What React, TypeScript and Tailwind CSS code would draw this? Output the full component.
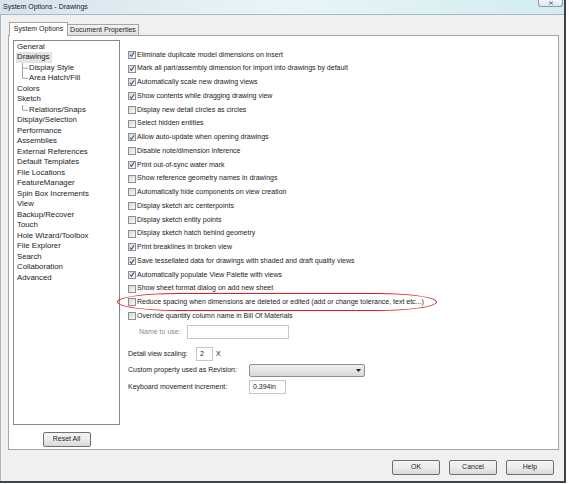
import React from "react";

const opts: [string, boolean][] = [
  ["Eliminate duplicate model dimensions on insert", true],
  ["Mark all part/assembly dimension for import into drawings by default", true],
  ["Automatically scale new drawing views", true],
  ["Show contents while dragging drawing view", true],
  ["Display new detail circles as circles", false],
  ["Select hidden entities", false],
  ["Allow auto-update when opening drawings", true],
  ["Disable note/dimension inference", false],
  ["Print out-of-sync water mark", true],
  ["Show reference geometry names in drawings", false],
  ["Automatically hide components on view creation", false],
  ["Display sketch arc centerpoints", false],
  ["Display sketch entity points", false],
  ["Display sketch hatch behind geometry", false],
  ["Print breaklines in broken view", true],
  ["Save tessellated data for drawings with shaded and draft quality views", true],
  ["Automatically populate View Palette with views", true],
  ["Show sheet format dialog on add new sheet", false],
  ["Reduce spacing when dimensions are deleted or edited (add or change tolerance, text etc...)", false],
  ["Override quantity column name in Bill Of Materials", false],
];

type Item = { label: string; child?: boolean; last?: boolean; selected?: boolean };
const items: Item[] = [
  { label: "General" },
  { label: "Drawings", selected: true },
  { label: "Display Style", child: true },
  { label: "Area Hatch/Fill", child: true, last: true },
  { label: "Colors" },
  { label: "Sketch" },
  { label: "Relations/Snaps", child: true, last: true },
  { label: "Display/Selection" },
  { label: "Performance" },
  { label: "Assemblies" },
  { label: "External References" },
  { label: "Default Templates" },
  { label: "File Locations" },
  { label: "FeatureManager" },
  { label: "Spin Box Increments" },
  { label: "View" },
  { label: "Backup/Recover" },
  { label: "Touch" },
  { label: "Hole Wizard/Toolbox" },
  { label: "File Explorer" },
  { label: "Search" },
  { label: "Collaboration" },
  { label: "Advanced" },
];

function CheckBox({ checked }: { checked: boolean }) {
  return (
    <div className="w-[8px] h-[8px] shrink-0 border border-[#8e8f8f] bg-gradient-to-br from-[#d6d6d6] to-[#fafafa] flex items-center justify-center">
      {checked && (
        <svg width="7" height="7" viewBox="0 0 7 7">
          <path d="M1 3.6 L2.8 5.6 L6 1" fill="none" stroke="#3b5c9e" strokeWidth="1.3" />
        </svg>
      )}
    </div>
  );
}

function Btn({ label, w }: { label: string; w: string }) {
  return (
    <div
      className={`${w} h-[15px] rounded-[2px] border border-[#707070] bg-gradient-to-b from-[#f4f4f4] via-[#ececec] to-[#d9d9d9] flex items-center justify-center text-[7px] text-[#1e1e1e]`}
    >
      {label}
    </div>
  );
}

export default function App() {
  return (
    <div
      className="w-[569px] h-[484px] bg-white overflow-hidden"
      style={{ fontFamily: '"Liberation Sans", Arial, sans-serif' }}
    >
      <div className="w-[566px] h-[483px] flex flex-col border-r-2 border-b-2 border-[#3f4447] bg-[#f0f0f0]">
        {/* title bar */}
        <div className="h-[14px] shrink-0 flex justify-between bg-gradient-to-r from-[#d6e3ec] via-[#e8f5f7] to-[#d3ecf0]">
          <div className="pl-[3px] pt-[2px] text-[7px] leading-[9px] text-[#1a1a1a]">System Options - Drawings</div>
          <div className="w-[25px] h-[7px] mr-[1px] rounded-b-[3px] border border-t-0 border-[#8a9aa6] bg-gradient-to-b from-[#f1f6f8] to-[#dbe6ec] flex items-center justify-center">
            <svg width="6" height="4" viewBox="0 0 6 4">
              <path d="M1 0.5 L5 3.5 M5 0.5 L1 3.5" stroke="#6b7b88" strokeWidth="1" />
            </svg>
          </div>
        </div>
        {/* client */}
        <div className="flex-1 flex flex-col border-t border-l border-[#a9b8c2] pl-[7px] pr-[5px] pt-[7px]">
          {/* tabs */}
          <div className="h-[13px] flex items-end pl-[1px] text-[7px] text-[#1e1e1e]">
            <div className="relative z-10 w-[59px] h-[14px] -mb-[1px] border border-b-0 border-[#a5a5a5] bg-white flex items-center justify-center">
              System Options
            </div>
            <div className="w-[71px] h-[11px] border border-l-0 border-b-0 border-[#a5a5a5] bg-gradient-to-b from-[#f2f2f2] to-[#e1e1e1] flex items-center justify-center">
              Document Properties
            </div>
          </div>
          {/* panel */}
          <div className="h-[415px] border border-[#a5a5a5] bg-white flex pl-[4px] pt-[4px]">
            {/* left column */}
            <div className="flex flex-col items-center w-[107px]">
              <div className="w-[107px] h-[385px] border border-[#828790] bg-white text-[7.8px] text-[#222] leading-[10.5px] pt-[0.5px]">
                {items.map((it) =>
                  it.child ? (
                    <div key={it.label} className="h-[10.5px] flex items-center pl-[3px]">
                      <svg width="12" height="10.5" viewBox="0 0 12 10.5" className="shrink-0">
                        <path
                          d={it.last ? "M5.5 0 V5.25 H11" : "M5.5 0 V10.5 M5.5 5.25 H11"}
                          fill="none"
                          stroke="#a0a0a0"
                          strokeWidth="1"
                        />
                      </svg>
                      <span>{it.label}</span>
                    </div>
                  ) : (
                    <div key={it.label} className="h-[10.5px] flex items-center pl-[2px]">
                      <span className={it.selected ? "bg-[#e3e3e3] px-[1px] pr-[2px]" : "px-[1px]"}>{it.label}</span>
                    </div>
                  )
                )}
              </div>
              <div className="mt-[7px]">
                <Btn label="Reset All" w="w-[48px]" />
              </div>
            </div>
            {/* right column */}
            <div className="ml-[8px] pt-[8px] flex flex-col text-[7px] text-[#222] whitespace-nowrap">
              {opts.map(([label, checked], i) => (
                <div key={label} className="relative h-[13.75px] flex items-center gap-[1px]">
                  <CheckBox checked={checked} />
                  <span>{label}</span>
                  {i === 18 && (
                    <div className="absolute left-[-11px] top-[-2.5px] w-[320px] h-[18px] rounded-[60px/9px] border-[1.5px] border-[#e11d24]" />
                  )}
                </div>
              ))}
              <div className="mt-[2px] h-[14px] flex items-center pl-[11px]">
                <span className="w-[48px] shrink-0 text-[#8a8a8a]">Name to use:</span>
                <div className="w-[102px] h-[14px] border border-[#c6c6c6] bg-white" />
              </div>
              <div className="mt-[8px] h-[14px] flex items-center">
                <span className="w-[68px] shrink-0">Detail view scaling:</span>
                <div className="w-[17px] h-[14px] border border-[#c6c6c6] bg-white flex items-center pl-[3px]">2</div>
                <span className="ml-[3px]">X</span>
              </div>
              <div className="mt-[3px] h-[13px] flex items-center">
                <span className="w-[121px] shrink-0">Custom property used as Revision:</span>
                <div className="w-[116px] h-[13px] rounded-[2px] border border-[#8e8f8f] bg-gradient-to-b from-[#f0f0f0] to-[#d8d8d8] flex items-center justify-end pr-[3px]">
                  <svg width="5" height="3" viewBox="0 0 5 3">
                    <path d="M0 0 H5 L2.5 3 Z" fill="#1a1a1a" />
                  </svg>
                </div>
              </div>
              <div className="mt-[3px] h-[14px] flex items-center">
                <span className="w-[121px] shrink-0">Keyboard movement increment:</span>
                <div className="w-[37px] h-[14px] border border-[#c6c6c6] bg-white flex items-center pl-[3px]">0.394in</div>
              </div>
            </div>
          </div>
          {/* bottom buttons */}
          <div className="mt-[10px] flex justify-end gap-[9px] pr-[5px]">
            <Btn label="OK" w="w-[48px]" />
            <Btn label="Cancel" w="w-[48px]" />
            <Btn label="Help" w="w-[48px]" />
          </div>
        </div>
      </div>
    </div>
  );
}
